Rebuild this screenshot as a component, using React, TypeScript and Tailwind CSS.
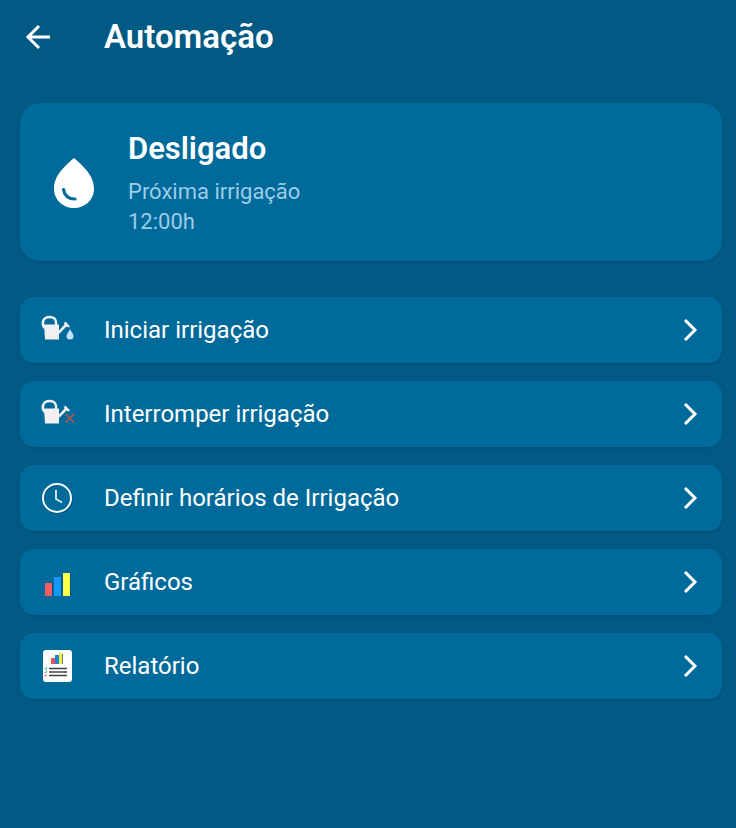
import type { ReactNode } from "react";

function WateringCan({ children }: { children: ReactNode }) {
  return (
    <svg viewBox="0 0 36 32" className="h-8 w-9" aria-hidden="true">
      <path d="M5.500 14C2 9.500 4 3 10.500 3S18 8 16.500 12" fill="none" stroke="#f1f1f3" strokeWidth="2.400" />
      <path d="M5 10.500H20V16.500L25.500 10.500L25 9L26.500 7.500L31 12.500L29.500 13.500L27.500 12.500L20 20V25.500H6Z" fill="#f1f1f3" />
      {children}
    </svg>
  );
}

function StartIcon() {
  return (
    <WateringCan>
      <path d="M31 15C29.500 18.500 27.500 20 27.500 22A3.500 3.500 0 0 0 34.500 22C34.500 20 32.500 18.500 31 15Z" fill="#bfe3ff" />
    </WateringCan>
  );
}

function StopIcon() {
  return (
    <WateringCan>
      <path d="M26.500 16L35 24.500M35 16L26.500 24.500" stroke="#b9584b" strokeWidth="1.500" />
    </WateringCan>
  );
}

function ClockIcon() {
  return (
    <svg viewBox="0 0 32 32" className="size-8" fill="none" aria-hidden="true">
      <circle cx="16.800" cy="16.800" r="14" stroke="#00527a" strokeWidth="2" />
      <circle cx="16" cy="16" r="14" stroke="#f3fbff" strokeWidth="2" />
      <path d="M15 8V17L21 20.500" stroke="#e0f2fb" strokeWidth="1.800" />
    </svg>
  );
}

function ChartIcon() {
  return (
    <svg viewBox="0 0 28 28" className="size-7" aria-hidden="true">
      <path d="M8 15h2v13H8zM17 9h2v19h-2zM26 5h2v23h-2z" fill="#00547c" />
      <rect x="2" y="15" width="7" height="13" fill="#f15b62" />
      <rect x="11" y="9" width="7" height="19" fill="#1597ff" />
      <rect x="20" y="5" width="7" height="23" fill="#ffff48" />
    </svg>
  );
}

function ReportIcon() {
  return (
    <svg viewBox="0 0 30 32" className="h-8 w-[30px]" aria-hidden="true">
      <rect x="1" width="29" height="32" rx="3" fill="#fff" />
      <rect x="9" y="8" width="4" height="6" fill="#f0525c" />
      <rect x="13" y="5" width="4" height="9" fill="#1587d8" />
      <path d="M20 4h1v10h-1z" fill="#777" />
      <rect x="17" y="3" width="3" height="11" fill="#f2ed45" />
      <path d="M7 18.500H25M7 22H25M7 25.500H25" stroke="#3e4247" strokeWidth="1.600" />
      <path d="M2.500 18.500L3.500 19.500L5 17M2.500 22L3.500 23L5 20.500" fill="none" stroke="#2a9c83" strokeWidth="1" />
      <path d="M2.700 24.500L4.700 26.500M4.700 24.500L2.700 26.500" stroke="#e04a55" strokeWidth="1" />
    </svg>
  );
}

const actions = [
  { label: "Iniciar irrigação", icon: <StartIcon /> },
  { label: "Interromper irrigação", icon: <StopIcon /> },
  { label: "Definir horários de Irrigação", icon: <ClockIcon /> },
  { label: "Gráficos", icon: <ChartIcon /> },
  { label: "Relatório", icon: <ReportIcon /> },
];

export default function App() {
  return (
    <div className="min-h-screen bg-[#005a84] font-[Roboto,sans-serif] text-white">
      <header className="flex h-[74px] items-center pl-5">
        <button type="button" aria-label="Voltar" className="flex w-[84px] pl-1">
          <svg viewBox="0 0 32 32" className="size-8" fill="none" stroke="currentColor" strokeWidth="3" aria-hidden="true">
            <path d="M26 16H4M15 5L4 16L15 27" />
          </svg>
        </button>
        <h1 className="text-[33px] leading-10 font-semibold">Automação</h1>
      </header>
      <main className="flex flex-col gap-9 pt-[29px] pr-[14px] pb-5 pl-5">
        <section className="flex items-center rounded-[20px] bg-[#006a9a] px-[34px] pt-[26px] pb-6 shadow-sm">
          <svg viewBox="0 0 40 50" className="mr-[34px] h-[50px] w-10 shrink-0" aria-hidden="true">
            <path d="M20 0C12 7 0 17 0 30.500C0 42 9 50 20 50S40 42 40 30.500C40 17 28 7 20 0Z" fill="#fff" />
            <path d="M9.500 31.500C10.500 38 14 41 21 41" fill="none" stroke="#006a9a" strokeWidth="3.200" strokeLinecap="round" />
          </svg>
          <div>
            <h2 className="text-[31px] leading-10 font-semibold">Desligado</h2>
            <p className="mt-2 text-[22px] leading-[30px] text-[#9bcde9]">
              Próxima irrigação
              <br />
              12:00h
            </p>
          </div>
        </section>
        <ul className="flex flex-col gap-[18px]">
          {actions.map(({ label, icon }) => (
            <li key={label}>
              <button
                type="button"
                className="flex h-[66px] w-full items-center rounded-[14px] bg-[#006a9a] pr-5 text-left shadow-sm"
              >
                <span className="flex w-[74px] shrink-0 justify-center">{icon}</span>
                <span className="flex-1 pl-[10px] text-2xl">{label}</span>
                <svg viewBox="0 0 24 24" className="size-6" fill="none" stroke="currentColor" strokeWidth="3" aria-hidden="true">
                  <path d="M7 2L17 12L7 22" />
                </svg>
              </button>
            </li>
          ))}
        </ul>
      </main>
    </div>
  );
}
